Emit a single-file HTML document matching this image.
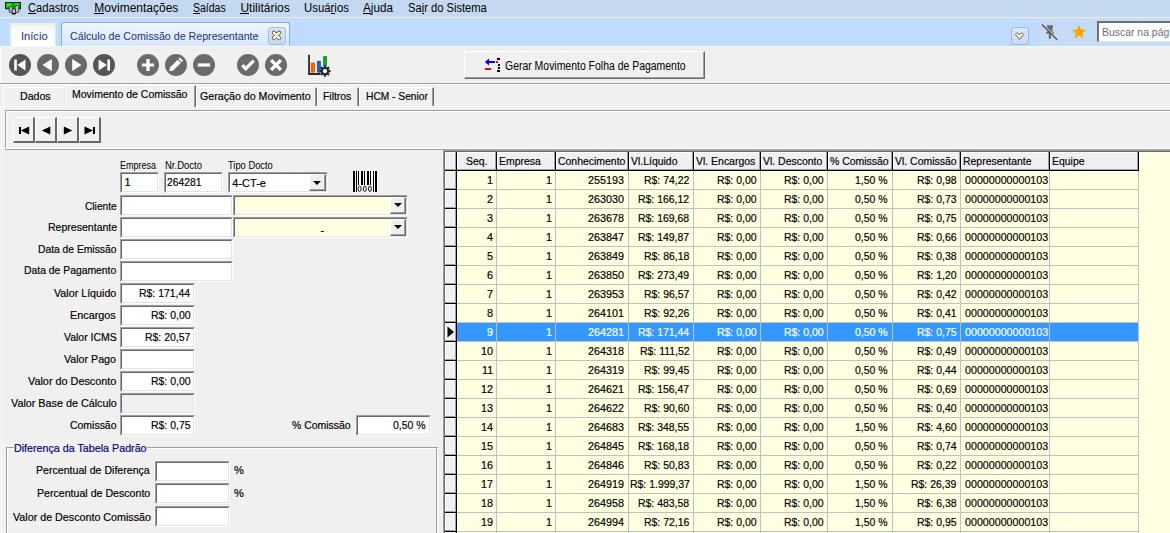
<!DOCTYPE html>
<html><head><meta charset="utf-8"><style>
html,body{margin:0;padding:0;}
body{width:1170px;height:533px;overflow:hidden;position:relative;background:#f0f0f0;font-family:"Liberation Sans",sans-serif;}
.t{position:absolute;white-space:pre;line-height:1;-webkit-text-stroke:0.18px currentColor;}
.r{position:absolute;}
svg{position:absolute;}
</style></head><body>
<div class="r" style="left:0px;top:0px;width:1170px;height:17px;background:#c4d9f0"></div>
<div class="r" style="left:0px;top:17px;width:1170px;height:1px;background:#eceef2"></div>
<svg style="left:0px;top:0px" width="24" height="17" viewBox="0 0 24 17">
<rect x="5.5" y="2.5" width="15" height="6.3" fill="#00b400" stroke="#062a06" stroke-width="1"/>
<rect x="7" y="3.5" width="4" height="3" fill="#10ff10"/><rect x="15" y="3.5" width="4" height="2" fill="#20e020"/>
<rect x="9.2" y="6.6" width="3.8" height="6" rx="1.2" fill="#b4b4b4" stroke="#222" stroke-width="0.8"/>
<rect x="15" y="5.6" width="3.8" height="7" rx="1.2" fill="#c0c0c0" stroke="#222" stroke-width="0.8"/>
<rect x="12" y="8.8" width="3.6" height="5.2" rx="1" fill="#bcbcbc" stroke="#111" stroke-width="0.8"/>
<rect x="12" y="13" width="3.6" height="1.2" fill="#000"/>
</svg>
<div class="t" style="left:28.30px;top:2px;font-size:12px;color:#000;transform:scaleX(0.9291);transform-origin:0 0;-webkit-text-stroke:0">Cadastros</div>
<div class="r" style="left:28px;top:13px;width:8px;height:1px;background:#000"></div>
<div class="t" style="left:94.30px;top:2px;font-size:12px;color:#000;-webkit-text-stroke:0">Movimentações</div>
<div class="r" style="left:94px;top:13px;width:10px;height:1px;background:#000"></div>
<div class="t" style="left:193.00px;top:2px;font-size:12px;color:#000;transform:scaleX(0.8757);transform-origin:0 0;-webkit-text-stroke:0">Saídas</div>
<div class="r" style="left:193px;top:13px;width:7px;height:1px;background:#000"></div>
<div class="t" style="left:240.40px;top:2px;font-size:12px;color:#000;-webkit-text-stroke:0">Utilitários</div>
<div class="r" style="left:240px;top:13px;width:9px;height:1px;background:#000"></div>
<div class="t" style="left:304.30px;top:2px;font-size:12px;color:#000;transform:scaleX(0.9489);transform-origin:0 0;-webkit-text-stroke:0">Usuários</div>
<div class="r" style="left:331px;top:13px;width:4px;height:1px;background:#000"></div>
<div class="t" style="left:363.20px;top:2px;font-size:12px;color:#000;transform:scaleX(0.9742);transform-origin:0 0;-webkit-text-stroke:0">Ajuda</div>
<div class="r" style="left:363px;top:13px;width:8px;height:1px;background:#000"></div>
<div class="t" style="left:408.20px;top:2px;font-size:12px;color:#000;transform:scaleX(0.9306);transform-origin:0 0;-webkit-text-stroke:0">Sair do Sistema</div>
<div class="r" style="left:422px;top:13px;width:2px;height:1px;background:#000"></div>
<div class="r" style="left:0px;top:18px;width:1170px;height:28px;background:#bfdbff"></div>
<div class="r" style="left:1036px;top:18px;width:134px;height:28px;background:#c6dbf5"></div>
<div class="r" style="left:0px;top:46px;width:1170px;height:1px;background:#f4f8fd"></div>
<div class="r" style="left:9px;top:22px;width:48px;height:24px;background:linear-gradient(#efedea,#efedea 2px,#f6f6f6 3px,#fbfbfb 50%,#fff);border:1px solid #d6dde6;border-bottom:none;border-radius:2px 2px 0 0;box-sizing:border-box"></div>
<div class="r" style="left:10px;top:25px;width:1px;height:21px;background:#c0f4ff"></div>
<div class="r" style="left:55px;top:25px;width:1px;height:21px;background:#c0f4ff"></div>
<div class="t" style="left:21.20px;top:31px;font-size:11px;color:#20357f;transform:scaleX(1.0115);transform-origin:0 0;-webkit-text-stroke:0">Início</div>
<div class="r" style="left:61px;top:22px;width:229px;height:24px;background:linear-gradient(#f0f6fe,#e4eefb 50%,#d8e7f9);border:1px solid #8aaedc;border-bottom:none;border-radius:3px 3px 0 0;box-sizing:border-box"></div>
<div class="r" style="left:62px;top:25px;width:1px;height:21px;background:#d0f4ff"></div>
<div class="t" style="left:69.50px;top:31px;font-size:11px;color:#20357f;transform:scaleX(0.9692);transform-origin:0 0;-webkit-text-stroke:0">Cálculo de Comissão de Representante</div>
<div class="r" style="left:268px;top:27px;width:18px;height:18px;background:linear-gradient(#d8e6f8,#c6daf3);border:1px solid #a4bde0;border-radius:3px;box-sizing:border-box"></div>
<svg style="left:271px;top:30px" width="12" height="12" viewBox="0 0 12 12">
<path d="M2.8 2.7 L8.2 8.1 M8.2 2.7 L2.8 8.1" stroke="#7a6420" stroke-width="4" stroke-linecap="round"/>
<path d="M2.8 2.7 L8.2 8.1 M8.2 2.7 L2.8 8.1" stroke="#fff" stroke-width="2.2" stroke-linecap="round"/>
</svg>
<div class="r" style="left:1011px;top:27px;width:18px;height:18px;background:linear-gradient(#dbe7f7,#c8daf1);border:1px solid #9db6d9;border-radius:3px;box-sizing:border-box"></div>
<svg style="left:1014px;top:31px" width="12" height="10" viewBox="0 0 12 10">
<path d="M1.5 3.5 L2.5 2.2 L3.8 2.2 L5.5 4 L7.2 2.2 L8.5 2.2 L9.5 3.5 L5.5 8.5 Z" fill="#fff" stroke="#7a6420" stroke-width="1"/>
</svg>
<svg style="left:1040px;top:23px" width="18" height="18" viewBox="0 0 18 18">
<path d="M7 2.2 H13 V4.5 L12.3 5.2 V8.3 L13.8 9.7 V10.7 H10.9 V15.7 H8.8 V10.7 H6.1 V9.7 L7.7 8.3 V5.2 L7 4.5 Z" fill="#6a6a6a"/>
<path d="M3.0 1.5 L18.3 16.8" stroke="#c6daf5" stroke-width="1.4"/>
<path d="M1.9 1.5 L17.2 16.8" stroke="#5e5e5e" stroke-width="1.6"/>
</svg>
<svg style="left:1071px;top:24px" width="16" height="16" viewBox="0 0 16 16">
<path d="M8 1 L10.1 5.6 L15 6.1 L11.3 9.4 L12.4 14.4 L8 11.8 L3.6 14.4 L4.7 9.4 L1 6.1 L5.9 5.6 Z" fill="#ffa500"/>
</svg>
<div class="r" style="left:1097px;top:21px;width:80px;height:21px;background:#fff;border-top:2px solid #6d6d6d;border-left:2px solid #6d6d6d;border-bottom:1px solid #e3e3e3;box-sizing:border-box"></div>
<div class="t" style="left:1101.70px;top:27px;font-size:11px;color:#6d6d80;transform:scaleX(0.9479);transform-origin:0 0;-webkit-text-stroke:0">Buscar na pág</div>
<div class="r" style="left:0px;top:47px;width:1px;height:36px;background:#fff"></div>
<div class="r" style="left:0px;top:83px;width:1170px;height:1px;background:#a0a0a0"></div>
<div class="r" style="left:0px;top:84px;width:1170px;height:1px;background:#fff"></div>
<svg style="left:7.75px;top:53px" width="24" height="24" viewBox="0 0 24 24"><circle cx="12" cy="12" r="11" fill="#555555"/><rect x="6.2" y="6.5" width="2.6" height="11" fill="#fff"/><path d="M9.3 12 L17.5 6.5 V17.5 Z" fill="#fff"/></svg>
<svg style="left:35.8px;top:53px" width="24" height="24" viewBox="0 0 24 24"><circle cx="12" cy="12" r="11" fill="#696969"/><path d="M6.5 12 L15.8 6 V18 Z" fill="#fff"/></svg>
<svg style="left:63.900000000000006px;top:53px" width="24" height="24" viewBox="0 0 24 24"><circle cx="12" cy="12" r="11" fill="#696969"/><path d="M17.5 12 L8.2 6 V18 Z" fill="#fff"/></svg>
<svg style="left:91.8px;top:53px" width="24" height="24" viewBox="0 0 24 24"><circle cx="12" cy="12" r="11" fill="#555555"/><rect x="15.4" y="6.5" width="2.6" height="11" fill="#fff"/><path d="M14.9 12 L6.6 6.5 V17.5 Z" fill="#fff"/></svg>
<svg style="left:135.8px;top:53px" width="24" height="24" viewBox="0 0 24 24"><circle cx="12" cy="12" r="11" fill="#6b6b6b"/><path d="M12 5.9 V18.1 M5.9 12 H18.1" stroke="#fff" stroke-width="3.2"/></svg>
<svg style="left:164px;top:53px" width="24" height="24" viewBox="0 0 24 24"><circle cx="12" cy="12" r="11" fill="#6b6b6b"/><path d="M5.4 18.2 L6 14.4 L13.6 6.8 L16.8 10 L9.2 17.6 Z" fill="#fff"/><path d="M14.3 6.1 L16 4.4 L19.2 7.6 L17.5 9.3 Z" fill="#fff"/></svg>
<svg style="left:191.8px;top:53px" width="24" height="24" viewBox="0 0 24 24"><circle cx="12" cy="12" r="11" fill="#6b6b6b"/><path d="M5.8 12 H18.1" stroke="#fff" stroke-width="3.2"/></svg>
<svg style="left:235.9px;top:53px" width="24" height="24" viewBox="0 0 24 24"><circle cx="12" cy="12" r="11" fill="#6b6b6b"/><path d="M6.3 12.2 L9.8 15.6 L17.8 7.6" fill="none" stroke="#fff" stroke-width="3.4"/></svg>
<svg style="left:264px;top:53px" width="24" height="24" viewBox="0 0 24 24"><circle cx="12" cy="12" r="11" fill="#6b6b6b"/><path d="M7.1 7.1 L16.9 16.9 M16.9 7.1 L7.1 16.9" stroke="#fff" stroke-width="3.4"/></svg>
<svg style="left:306px;top:53px" width="26" height="24" viewBox="0 0 26 24">
<path d="M3 1.8 V21 H14.5" fill="none" stroke="#2b2b2b" stroke-width="1.8"/>
<rect x="4.7" y="9.6" width="4.3" height="10.2" rx="0.8" fill="#ff6000"/>
<rect x="10.9" y="7.8" width="4" height="12" rx="0.8" fill="#1c60c8"/>
<rect x="17" y="3" width="4" height="10.3" rx="0.8" fill="#2a9a2a"/>
<g transform="translate(19,18.1)"><circle r="4.2" fill="#2b2b2b"/>
<path d="M-1.1 -5.6 H1.1 V5.6 H-1.1 Z M-5.6 -1.1 V1.1 H5.6 V-1.1 Z" fill="#2b2b2b"/>
<path d="M-1.1 -5.6 H1.1 V5.6 H-1.1 Z M-5.6 -1.1 V1.1 H5.6 V-1.1 Z" fill="#2b2b2b" transform="rotate(45)"/>
<circle r="2.1" fill="#fff"/></g>
</svg>
<div class="r" style="left:464px;top:51px;width:241px;height:28px;background:#f0f0f0;border-top:1px solid #fff;border-left:1px solid #fff;border-bottom:1px solid #696969;border-right:1px solid #696969;box-sizing:border-box"></div>
<div class="r" style="left:465px;top:52px;width:239px;height:26px;border-bottom:1px solid #a0a0a0;border-right:1px solid #a0a0a0;box-sizing:border-box"></div>
<svg style="left:478px;top:52px" width="26" height="24" viewBox="0 0 26 24" shape-rendering="crispEdges">
<rect x="9" y="9" width="8" height="2" fill="#0000ff"/>
<path d="M6.8 10 L11 6.6 V13.4 Z" fill="#0000ff" shape-rendering="auto"/>
<rect x="18" y="9" width="2" height="2" fill="#ff0000"/>
<rect x="7" y="16" width="6" height="2" fill="#ff0000"/>
<rect x="19" y="6" width="3" height="2" fill="#000"/><rect x="20" y="12" width="2" height="2" fill="#000"/>
<rect x="20" y="15" width="2" height="2" fill="#000"/><rect x="19" y="18" width="3" height="2" fill="#000"/>
</svg>
<div class="t" style="left:505.00px;top:60px;font-size:12px;color:#000;transform:scaleX(0.8707);transform-origin:0 0;-webkit-text-stroke:0">Gerar Movimento Folha de Pagamento</div>
<div class="r" style="left:3px;top:87px;width:62px;height:19px;background:#f0f0f0;border-top:1px solid #fff;border-left:1px solid #fff;border-right:1px solid #e3e3e3;box-sizing:border-box"></div>
<div class="r" style="left:196px;top:87px;width:121px;height:19px;background:#f0f0f0;border-top:1px solid #fff;border-left:1px solid #fff;border-right:1px solid #696969;box-sizing:border-box"></div>
<div class="r" style="left:197px;top:88px;width:119px;height:18px;border-right:1px solid #a0a0a0;box-sizing:border-box"></div>
<div class="r" style="left:317px;top:87px;width:42px;height:19px;background:#f0f0f0;border-top:1px solid #fff;border-left:1px solid #fff;border-right:1px solid #696969;box-sizing:border-box"></div>
<div class="r" style="left:318px;top:88px;width:40px;height:18px;border-right:1px solid #a0a0a0;box-sizing:border-box"></div>
<div class="r" style="left:359px;top:87px;width:75px;height:19px;background:#f0f0f0;border-top:1px solid #fff;border-left:1px solid #fff;border-right:1px solid #696969;box-sizing:border-box"></div>
<div class="r" style="left:360px;top:88px;width:73px;height:18px;border-right:1px solid #a0a0a0;box-sizing:border-box"></div>
<div class="r" style="left:0px;top:106px;width:1170px;height:1px;background:#fff"></div>
<div class="r" style="left:1px;top:106px;width:1px;height:427px;background:#f8f8f8"></div>
<div class="r" style="left:65px;top:85px;width:131px;height:22px;background:#f0f0f0;border-top:1px solid #fff;border-left:1px solid #fff;border-right:1px solid #696969;box-sizing:border-box"></div>
<div class="r" style="left:66px;top:86px;width:129px;height:21px;border-right:1px solid #a0a0a0;box-sizing:border-box"></div>
<div class="r" style="left:66px;top:106px;width:128px;height:2px;background:#f0f0f0"></div>
<div class="t" style="left:20.00px;top:91px;font-size:11px;color:#000;transform:scaleX(0.9625);transform-origin:0 0;">Dados</div>
<div class="t" style="left:71.80px;top:89px;font-size:11px;color:#000;transform:scaleX(0.9537);transform-origin:0 0;">Movimento de Comissão</div>
<div class="t" style="left:200.40px;top:91px;font-size:11px;color:#000;transform:scaleX(0.9675);transform-origin:0 0;">Geração do Movimento</div>
<div class="t" style="left:323.30px;top:91px;font-size:11px;color:#000;transform:scaleX(0.9433);transform-origin:0 0;">Filtros</div>
<div class="t" style="left:365.60px;top:91px;font-size:11px;color:#000;transform:scaleX(0.9284);transform-origin:0 0;">HCM - Senior</div>
<div class="r" style="left:5px;top:110px;width:1165px;height:1px;background:#a0a0a0"></div>
<div class="r" style="left:5px;top:110px;width:1px;height:39px;background:#a0a0a0"></div>
<div class="r" style="left:6px;top:111px;width:1164px;height:1px;background:#fff"></div>
<div class="r" style="left:6px;top:111px;width:1px;height:38px;background:#fff"></div>
<div class="r" style="left:5px;top:148px;width:1165px;height:1px;background:#fff"></div>
<div class="r" style="left:5px;top:149px;width:1165px;height:1px;background:#a0a0a0"></div>
<div class="r" style="left:13px;top:117px;width:22px;height:26px;background:#f0f0f0;border-top:1px solid #fff;border-left:1px solid #fff;border-bottom:2px solid #696969;border-right:2px solid #696969;box-sizing:border-box"></div>
<div class="r" style="left:35px;top:117px;width:22px;height:26px;background:#f0f0f0;border-top:1px solid #fff;border-left:1px solid #fff;border-bottom:2px solid #696969;border-right:2px solid #696969;box-sizing:border-box"></div>
<div class="r" style="left:57px;top:117px;width:22px;height:26px;background:#f0f0f0;border-top:1px solid #fff;border-left:1px solid #fff;border-bottom:2px solid #696969;border-right:2px solid #696969;box-sizing:border-box"></div>
<div class="r" style="left:79px;top:117px;width:22px;height:26px;background:#f0f0f0;border-top:1px solid #fff;border-left:1px solid #fff;border-bottom:2px solid #696969;border-right:2px solid #696969;box-sizing:border-box"></div>
<svg style="left:13px;top:117px" width="88" height="26" viewBox="0 0 88 26">
<rect x="6" y="10" width="2" height="7" fill="#000"/><path d="M7.8 13.5 L16.2 9.6 V17.4 Z" fill="#000"/>
<path d="M28.8 13.5 L37.3 9.6 V17.4 Z" fill="#000"/>
<path d="M59.3 13.5 L50.8 9.6 V17.4 Z" fill="#000"/>
<path d="M80 13.5 L71.5 9.6 V17.4 Z" fill="#000"/><rect x="80" y="10" width="2" height="7" fill="#000"/>
</svg>
<div class="t" style="left:120.30px;top:161px;font-size:10px;color:#000;transform:scaleX(0.8975);transform-origin:0 0;-webkit-text-stroke:0">Empresa</div>
<div class="t" style="left:164.60px;top:161px;font-size:10px;color:#000;transform:scaleX(0.9513);transform-origin:0 0;-webkit-text-stroke:0">Nr.Docto</div>
<div class="t" style="left:228.20px;top:161px;font-size:10px;color:#000;transform:scaleX(0.9333);transform-origin:0 0;-webkit-text-stroke:0">Tipo Docto</div>
<div class="r" style="left:120px;top:172px;width:39px;height:21px;background:#fff;border-top:1px solid #a0a0a0;border-left:1px solid #a0a0a0;border-bottom:1px solid #fff;border-right:1px solid #fff;box-sizing:border-box"></div>
<div class="r" style="left:121px;top:173px;width:37px;height:19px;border-top:1px solid #696969;border-left:1px solid #696969;border-bottom:1px solid #e3e3e3;border-right:1px solid #e3e3e3;box-sizing:border-box"></div>
<div class="t" style="left:124.50px;top:177px;font-size:11px;color:#000;">1</div>
<div class="r" style="left:164px;top:172px;width:59px;height:21px;background:#fff;border-top:1px solid #a0a0a0;border-left:1px solid #a0a0a0;border-bottom:1px solid #fff;border-right:1px solid #fff;box-sizing:border-box"></div>
<div class="r" style="left:165px;top:173px;width:57px;height:19px;border-top:1px solid #696969;border-left:1px solid #696969;border-bottom:1px solid #e3e3e3;border-right:1px solid #e3e3e3;box-sizing:border-box"></div>
<div class="t" style="left:167.00px;top:177px;font-size:11px;color:#000;transform:scaleX(0.9378);transform-origin:0 0;">264281</div>
<div class="r" style="left:228px;top:172px;width:100px;height:21px;background:#fff;border-top:1px solid #a0a0a0;border-left:1px solid #a0a0a0;border-bottom:1px solid #fff;border-right:1px solid #fff;box-sizing:border-box"></div>
<div class="r" style="left:229px;top:173px;width:98px;height:19px;border-top:1px solid #696969;border-left:1px solid #696969;border-bottom:1px solid #e3e3e3;border-right:1px solid #e3e3e3;box-sizing:border-box"></div>
<div class="r" style="left:309px;top:174px;width:17px;height:17px;background:#f0f0f0;border-top:1px solid #fff;border-left:1px solid #fff;border-bottom:1px solid #696969;border-right:1px solid #696969;box-sizing:border-box"></div>
<div class="r" style="left:310px;top:175px;width:15px;height:15px;border-bottom:1px solid #a0a0a0;border-right:1px solid #a0a0a0;box-sizing:border-box"></div>
<svg style="left:313px;top:181px" width="9" height="5" viewBox="0 0 9 5"><path d="M0 0 H8 L4 4 Z" fill="#000"/></svg>
<div class="t" style="left:232.30px;top:178px;font-size:11px;color:#000;">4-CT-e</div>
<svg style="left:352px;top:170px" width="26" height="23" viewBox="0 0 26 23">
<rect x="0" y="0" width="26" height="23" fill="#fff" opacity="0.4"/>
<g shape-rendering="crispEdges">
<rect x="1" y="1" width="2" height="21" fill="#000"/><rect x="4" y="1" width="1" height="21" fill="#000"/>
<rect x="6" y="1" width="1" height="14" fill="#000"/><rect x="9" y="1" width="2" height="14" fill="#000"/>
<rect x="12" y="1" width="1" height="14" fill="#000"/><rect x="15" y="1" width="2" height="14" fill="#000"/>
<rect x="18" y="1" width="1" height="14" fill="#000"/><rect x="21" y="1" width="1" height="21" fill="#000"/>
<rect x="23" y="1" width="2" height="21" fill="#000"/></g>
<ellipse cx="7.6" cy="18.8" rx="1.5" ry="2.7" fill="none" stroke="#000" stroke-width="0.9"/>
<ellipse cx="12.8" cy="18.8" rx="1.5" ry="2.7" fill="none" stroke="#000" stroke-width="0.9"/>
<ellipse cx="17.9" cy="18.8" rx="1.5" ry="2.7" fill="none" stroke="#000" stroke-width="0.9"/>
</svg>
<div class="t" style="left:85.10px;top:201px;font-size:11px;color:#000;transform:scaleX(0.9265);transform-origin:0 0;">Cliente</div>
<div class="t" style="left:47.60px;top:222px;font-size:11px;color:#000;transform:scaleX(0.9583);transform-origin:0 0;">Representante</div>
<div class="t" style="left:38.00px;top:244px;font-size:11px;color:#000;transform:scaleX(0.9357);transform-origin:0 0;">Data de Emissão</div>
<div class="t" style="left:24.20px;top:265px;font-size:11px;color:#000;transform:scaleX(0.9429);transform-origin:0 0;">Data de Pagamento</div>
<div class="r" style="left:120px;top:195px;width:113px;height:21px;background:#fff;border-top:1px solid #a0a0a0;border-left:1px solid #a0a0a0;border-bottom:1px solid #fff;border-right:1px solid #fff;box-sizing:border-box"></div>
<div class="r" style="left:121px;top:196px;width:111px;height:19px;border-top:1px solid #696969;border-left:1px solid #696969;border-bottom:1px solid #e3e3e3;border-right:1px solid #e3e3e3;box-sizing:border-box"></div>
<div class="r" style="left:120px;top:217px;width:113px;height:21px;background:#fff;border-top:1px solid #a0a0a0;border-left:1px solid #a0a0a0;border-bottom:1px solid #fff;border-right:1px solid #fff;box-sizing:border-box"></div>
<div class="r" style="left:121px;top:218px;width:111px;height:19px;border-top:1px solid #696969;border-left:1px solid #696969;border-bottom:1px solid #e3e3e3;border-right:1px solid #e3e3e3;box-sizing:border-box"></div>
<div class="r" style="left:120px;top:239px;width:113px;height:21px;background:#fff;border-top:1px solid #a0a0a0;border-left:1px solid #a0a0a0;border-bottom:1px solid #fff;border-right:1px solid #fff;box-sizing:border-box"></div>
<div class="r" style="left:121px;top:240px;width:111px;height:19px;border-top:1px solid #696969;border-left:1px solid #696969;border-bottom:1px solid #e3e3e3;border-right:1px solid #e3e3e3;box-sizing:border-box"></div>
<div class="r" style="left:120px;top:261px;width:113px;height:21px;background:#fff;border-top:1px solid #a0a0a0;border-left:1px solid #a0a0a0;border-bottom:1px solid #fff;border-right:1px solid #fff;box-sizing:border-box"></div>
<div class="r" style="left:121px;top:262px;width:111px;height:19px;border-top:1px solid #696969;border-left:1px solid #696969;border-bottom:1px solid #e3e3e3;border-right:1px solid #e3e3e3;box-sizing:border-box"></div>
<div class="r" style="left:233px;top:195px;width:175px;height:21px;background:#ffffe1;border-top:1px solid #a0a0a0;border-left:1px solid #a0a0a0;border-bottom:1px solid #fff;border-right:1px solid #fff;box-sizing:border-box"></div>
<div class="r" style="left:234px;top:196px;width:173px;height:19px;border-top:1px solid #696969;border-left:1px solid #696969;border-bottom:1px solid #e3e3e3;border-right:1px solid #e3e3e3;box-sizing:border-box"></div>
<div class="r" style="left:390px;top:197px;width:16px;height:17px;background:#f0f0f0;border-top:1px solid #fff;border-left:1px solid #fff;border-bottom:1px solid #696969;border-right:1px solid #696969;box-sizing:border-box"></div>
<div class="r" style="left:391px;top:198px;width:14px;height:15px;border-bottom:1px solid #a0a0a0;border-right:1px solid #a0a0a0;box-sizing:border-box"></div>
<svg style="left:394px;top:203px" width="9" height="5" viewBox="0 0 9 5"><path d="M0 0 H8 L4 4 Z" fill="#000"/></svg>
<div class="r" style="left:233px;top:217px;width:175px;height:21px;background:#ffffe1;border-top:1px solid #a0a0a0;border-left:1px solid #a0a0a0;border-bottom:1px solid #fff;border-right:1px solid #fff;box-sizing:border-box"></div>
<div class="r" style="left:234px;top:218px;width:173px;height:19px;border-top:1px solid #696969;border-left:1px solid #696969;border-bottom:1px solid #e3e3e3;border-right:1px solid #e3e3e3;box-sizing:border-box"></div>
<div class="r" style="left:390px;top:219px;width:16px;height:17px;background:#f0f0f0;border-top:1px solid #fff;border-left:1px solid #fff;border-bottom:1px solid #696969;border-right:1px solid #696969;box-sizing:border-box"></div>
<div class="r" style="left:391px;top:220px;width:14px;height:15px;border-bottom:1px solid #a0a0a0;border-right:1px solid #a0a0a0;box-sizing:border-box"></div>
<svg style="left:394px;top:225px" width="9" height="5" viewBox="0 0 9 5"><path d="M0 0 H8 L4 4 Z" fill="#000"/></svg>
<div class="t" style="left:320.50px;top:225px;font-size:11px;color:#000;">-</div>
<div class="t" style="left:54.00px;top:288px;font-size:11px;color:#000;transform:scaleX(0.9734);transform-origin:0 0;">Valor Líquido</div>
<div class="r" style="left:120px;top:283px;width:75px;height:21px;background:#fff;border-top:1px solid #a0a0a0;border-left:1px solid #a0a0a0;border-bottom:1px solid #fff;border-right:1px solid #fff;box-sizing:border-box"></div>
<div class="r" style="left:121px;top:284px;width:73px;height:19px;border-top:1px solid #696969;border-left:1px solid #696969;border-bottom:1px solid #e3e3e3;border-right:1px solid #e3e3e3;box-sizing:border-box"></div>
<div class="t" style="left:139.40px;top:288px;font-size:11px;color:#000;transform:scaleX(0.9500);transform-origin:0 0;">R$: 171,44</div>
<div class="t" style="left:70.00px;top:310px;font-size:11px;color:#000;transform:scaleX(0.9851);transform-origin:0 0;">Encargos</div>
<div class="r" style="left:120px;top:305px;width:75px;height:21px;background:#fff;border-top:1px solid #a0a0a0;border-left:1px solid #a0a0a0;border-bottom:1px solid #fff;border-right:1px solid #fff;box-sizing:border-box"></div>
<div class="r" style="left:121px;top:306px;width:73px;height:19px;border-top:1px solid #696969;border-left:1px solid #696969;border-bottom:1px solid #e3e3e3;border-right:1px solid #e3e3e3;box-sizing:border-box"></div>
<div class="t" style="left:150.80px;top:310px;font-size:11px;color:#000;transform:scaleX(0.9500);transform-origin:0 0;">R$: 0,00</div>
<div class="t" style="left:64.00px;top:332px;font-size:11px;color:#000;transform:scaleX(0.9509);transform-origin:0 0;">Valor ICMS</div>
<div class="r" style="left:120px;top:327px;width:75px;height:21px;background:#fff;border-top:1px solid #a0a0a0;border-left:1px solid #a0a0a0;border-bottom:1px solid #fff;border-right:1px solid #fff;box-sizing:border-box"></div>
<div class="r" style="left:121px;top:328px;width:73px;height:19px;border-top:1px solid #696969;border-left:1px solid #696969;border-bottom:1px solid #e3e3e3;border-right:1px solid #e3e3e3;box-sizing:border-box"></div>
<div class="t" style="left:145.10px;top:332px;font-size:11px;color:#000;transform:scaleX(0.9500);transform-origin:0 0;">R$: 20,57</div>
<div class="t" style="left:64.00px;top:354px;font-size:11px;color:#000;transform:scaleX(0.9685);transform-origin:0 0;">Valor Pago</div>
<div class="r" style="left:120px;top:349px;width:75px;height:21px;background:#fff;border-top:1px solid #a0a0a0;border-left:1px solid #a0a0a0;border-bottom:1px solid #fff;border-right:1px solid #fff;box-sizing:border-box"></div>
<div class="r" style="left:121px;top:350px;width:73px;height:19px;border-top:1px solid #696969;border-left:1px solid #696969;border-bottom:1px solid #e3e3e3;border-right:1px solid #e3e3e3;box-sizing:border-box"></div>
<div class="t" style="left:27.60px;top:376px;font-size:11px;color:#000;transform:scaleX(0.9856);transform-origin:0 0;">Valor do Desconto</div>
<div class="r" style="left:120px;top:371px;width:75px;height:21px;background:#fff;border-top:1px solid #a0a0a0;border-left:1px solid #a0a0a0;border-bottom:1px solid #fff;border-right:1px solid #fff;box-sizing:border-box"></div>
<div class="r" style="left:121px;top:372px;width:73px;height:19px;border-top:1px solid #696969;border-left:1px solid #696969;border-bottom:1px solid #e3e3e3;border-right:1px solid #e3e3e3;box-sizing:border-box"></div>
<div class="t" style="left:150.80px;top:376px;font-size:11px;color:#000;transform:scaleX(0.9500);transform-origin:0 0;">R$: 0,00</div>
<div class="t" style="left:10.50px;top:398px;font-size:11px;color:#000;transform:scaleX(0.9796);transform-origin:0 0;">Valor Base de Cálculo</div>
<div class="r" style="left:120px;top:393px;width:75px;height:21px;background:#f0f0f0;border-top:1px solid #a0a0a0;border-left:1px solid #a0a0a0;border-bottom:1px solid #fff;border-right:1px solid #fff;box-sizing:border-box"></div>
<div class="r" style="left:121px;top:394px;width:73px;height:19px;border-top:1px solid #696969;border-left:1px solid #696969;border-bottom:1px solid #e3e3e3;border-right:1px solid #e3e3e3;box-sizing:border-box"></div>
<div class="t" style="left:69.70px;top:420px;font-size:11px;color:#000;transform:scaleX(0.9510);transform-origin:0 0;">Comissão</div>
<div class="r" style="left:120px;top:415px;width:75px;height:21px;background:#fff;border-top:1px solid #a0a0a0;border-left:1px solid #a0a0a0;border-bottom:1px solid #fff;border-right:1px solid #fff;box-sizing:border-box"></div>
<div class="r" style="left:121px;top:416px;width:73px;height:19px;border-top:1px solid #696969;border-left:1px solid #696969;border-bottom:1px solid #e3e3e3;border-right:1px solid #e3e3e3;box-sizing:border-box"></div>
<div class="t" style="left:150.80px;top:420px;font-size:11px;color:#000;transform:scaleX(0.9500);transform-origin:0 0;">R$: 0,75</div>
<div class="t" style="left:292.30px;top:420px;font-size:11px;color:#000;transform:scaleX(0.9500);transform-origin:0 0;">% Comissão</div>
<div class="r" style="left:356px;top:415px;width:75px;height:21px;background:#fff;border-top:1px solid #a0a0a0;border-left:1px solid #a0a0a0;border-bottom:1px solid #fff;border-right:1px solid #fff;box-sizing:border-box"></div>
<div class="r" style="left:357px;top:416px;width:73px;height:19px;border-top:1px solid #696969;border-left:1px solid #696969;border-bottom:1px solid #e3e3e3;border-right:1px solid #e3e3e3;box-sizing:border-box"></div>
<div class="t" style="left:393.25px;top:420px;font-size:11px;color:#000;transform:scaleX(0.9500);transform-origin:0 0;">0,50 %</div>
<div class="r" style="left:6px;top:447px;width:432px;height:100px;border-top:1px solid #a0a0a0;border-left:1px solid #a0a0a0;border-right:1px solid #fff;box-sizing:border-box"></div>
<div class="r" style="left:7px;top:448px;width:430px;height:100px;border-top:1px solid #fff;border-left:1px solid #fff;border-right:1px solid #a0a0a0;box-sizing:border-box"></div>
<div class="r" style="left:437px;top:447px;width:1px;height:1px;background:#a0a0a0"></div>
<div class="r" style="left:14px;top:440px;width:133px;height:14px;background:#f0f0f0"></div>
<div class="t" style="left:14.20px;top:443px;font-size:11px;color:#000080;transform:scaleX(0.9735);transform-origin:0 0;">Diferença da Tabela Padrão</div>
<div class="t" style="left:36.40px;top:465px;font-size:11px;color:#000;transform:scaleX(0.9639);transform-origin:0 0;">Percentual de Diferença</div>
<div class="t" style="left:37.30px;top:488px;font-size:11px;color:#000;transform:scaleX(0.9644);transform-origin:0 0;">Percentual de Desconto</div>
<div class="t" style="left:12.75px;top:512px;font-size:11px;color:#000;transform:scaleX(0.9743);transform-origin:0 0;">Valor de Desconto Comissão</div>
<div class="r" style="left:155px;top:461px;width:75px;height:21px;background:#fff;border-top:1px solid #a0a0a0;border-left:1px solid #a0a0a0;border-bottom:1px solid #fff;border-right:1px solid #fff;box-sizing:border-box"></div>
<div class="r" style="left:156px;top:462px;width:73px;height:19px;border-top:1px solid #696969;border-left:1px solid #696969;border-bottom:1px solid #e3e3e3;border-right:1px solid #e3e3e3;box-sizing:border-box"></div>
<div class="r" style="left:155px;top:483px;width:75px;height:21px;background:#fff;border-top:1px solid #a0a0a0;border-left:1px solid #a0a0a0;border-bottom:1px solid #fff;border-right:1px solid #fff;box-sizing:border-box"></div>
<div class="r" style="left:156px;top:484px;width:73px;height:19px;border-top:1px solid #696969;border-left:1px solid #696969;border-bottom:1px solid #e3e3e3;border-right:1px solid #e3e3e3;box-sizing:border-box"></div>
<div class="r" style="left:155px;top:506px;width:75px;height:21px;background:#fff;border-top:1px solid #a0a0a0;border-left:1px solid #a0a0a0;border-bottom:1px solid #fff;border-right:1px solid #fff;box-sizing:border-box"></div>
<div class="r" style="left:156px;top:507px;width:73px;height:19px;border-top:1px solid #696969;border-left:1px solid #696969;border-bottom:1px solid #e3e3e3;border-right:1px solid #e3e3e3;box-sizing:border-box"></div>
<div class="t" style="left:234.00px;top:465px;font-size:11px;color:#000;">%</div>
<div class="t" style="left:234.00px;top:488px;font-size:11px;color:#000;">%</div>
<div class="r" style="left:443px;top:150px;width:727px;height:383px;background:#ffffe1"></div>
<div class="r" style="left:443px;top:150px;width:727px;height:1px;background:#a0a0a0"></div>
<div class="r" style="left:443px;top:151px;width:727px;height:1px;background:#696969"></div>
<div class="r" style="left:443px;top:150px;width:1px;height:383px;background:#a0a0a0"></div>
<div class="r" style="left:444px;top:151px;width:1px;height:382px;background:#696969"></div>
<div class="r" style="left:445px;top:152px;width:11px;height:18px;background:#f0f0f0"></div>
<div class="r" style="left:445px;top:152px;width:10px;height:1px;background:#fff"></div>
<div class="r" style="left:445px;top:152px;width:1px;height:17px;background:#fff"></div>
<div class="r" style="left:445px;top:169px;width:11px;height:1px;background:#a0a0a0"></div>
<div class="r" style="left:455px;top:152px;width:1px;height:18px;background:#a0a0a0"></div>
<div class="r" style="left:445px;top:170px;width:12px;height:1px;background:#000"></div>
<div class="r" style="left:456px;top:152px;width:1px;height:19px;background:#000"></div>
<div class="r" style="left:457px;top:152px;width:39px;height:18px;background:#f0f0f0"></div>
<div class="r" style="left:457px;top:152px;width:38px;height:1px;background:#fff"></div>
<div class="r" style="left:457px;top:152px;width:1px;height:17px;background:#fff"></div>
<div class="r" style="left:457px;top:169px;width:39px;height:1px;background:#a0a0a0"></div>
<div class="r" style="left:495px;top:152px;width:1px;height:18px;background:#a0a0a0"></div>
<div class="r" style="left:457px;top:170px;width:40px;height:1px;background:#000"></div>
<div class="r" style="left:496px;top:152px;width:1px;height:19px;background:#000"></div>
<div class="t" style="left:465.50px;top:156px;font-size:11px;color:#000;transform:scaleX(0.9500);transform-origin:0 0;">Seq.</div>
<div class="r" style="left:497px;top:152px;width:58px;height:18px;background:#f0f0f0"></div>
<div class="r" style="left:497px;top:152px;width:57px;height:1px;background:#fff"></div>
<div class="r" style="left:497px;top:152px;width:1px;height:17px;background:#fff"></div>
<div class="r" style="left:497px;top:169px;width:58px;height:1px;background:#a0a0a0"></div>
<div class="r" style="left:554px;top:152px;width:1px;height:18px;background:#a0a0a0"></div>
<div class="r" style="left:497px;top:170px;width:59px;height:1px;background:#000"></div>
<div class="r" style="left:555px;top:152px;width:1px;height:19px;background:#000"></div>
<div class="t" style="left:499.30px;top:156px;font-size:11px;color:#000;transform:scaleX(0.9500);transform-origin:0 0;">Empresa</div>
<div class="r" style="left:556px;top:152px;width:72px;height:18px;background:#f0f0f0"></div>
<div class="r" style="left:556px;top:152px;width:71px;height:1px;background:#fff"></div>
<div class="r" style="left:556px;top:152px;width:1px;height:17px;background:#fff"></div>
<div class="r" style="left:556px;top:169px;width:72px;height:1px;background:#a0a0a0"></div>
<div class="r" style="left:627px;top:152px;width:1px;height:18px;background:#a0a0a0"></div>
<div class="r" style="left:556px;top:170px;width:73px;height:1px;background:#000"></div>
<div class="r" style="left:628px;top:152px;width:1px;height:19px;background:#000"></div>
<div class="t" style="left:558.30px;top:156px;font-size:11px;color:#000;transform:scaleX(0.9500);transform-origin:0 0;">Conhecimento</div>
<div class="r" style="left:629px;top:152px;width:64px;height:18px;background:#f0f0f0"></div>
<div class="r" style="left:629px;top:152px;width:63px;height:1px;background:#fff"></div>
<div class="r" style="left:629px;top:152px;width:1px;height:17px;background:#fff"></div>
<div class="r" style="left:629px;top:169px;width:64px;height:1px;background:#a0a0a0"></div>
<div class="r" style="left:692px;top:152px;width:1px;height:18px;background:#a0a0a0"></div>
<div class="r" style="left:629px;top:170px;width:65px;height:1px;background:#000"></div>
<div class="r" style="left:693px;top:152px;width:1px;height:19px;background:#000"></div>
<div class="t" style="left:631.30px;top:156px;font-size:11px;color:#000;transform:scaleX(0.9500);transform-origin:0 0;">Vl.Líquido</div>
<div class="r" style="left:694px;top:152px;width:66px;height:18px;background:#f0f0f0"></div>
<div class="r" style="left:694px;top:152px;width:65px;height:1px;background:#fff"></div>
<div class="r" style="left:694px;top:152px;width:1px;height:17px;background:#fff"></div>
<div class="r" style="left:694px;top:169px;width:66px;height:1px;background:#a0a0a0"></div>
<div class="r" style="left:759px;top:152px;width:1px;height:18px;background:#a0a0a0"></div>
<div class="r" style="left:694px;top:170px;width:67px;height:1px;background:#000"></div>
<div class="r" style="left:760px;top:152px;width:1px;height:19px;background:#000"></div>
<div class="t" style="left:696.30px;top:156px;font-size:11px;color:#000;transform:scaleX(0.9500);transform-origin:0 0;">Vl. Encargos</div>
<div class="r" style="left:761px;top:152px;width:66px;height:18px;background:#f0f0f0"></div>
<div class="r" style="left:761px;top:152px;width:65px;height:1px;background:#fff"></div>
<div class="r" style="left:761px;top:152px;width:1px;height:17px;background:#fff"></div>
<div class="r" style="left:761px;top:169px;width:66px;height:1px;background:#a0a0a0"></div>
<div class="r" style="left:826px;top:152px;width:1px;height:18px;background:#a0a0a0"></div>
<div class="r" style="left:761px;top:170px;width:67px;height:1px;background:#000"></div>
<div class="r" style="left:827px;top:152px;width:1px;height:19px;background:#000"></div>
<div class="t" style="left:763.30px;top:156px;font-size:11px;color:#000;transform:scaleX(0.9500);transform-origin:0 0;">Vl. Desconto</div>
<div class="r" style="left:828px;top:152px;width:64px;height:18px;background:#f0f0f0"></div>
<div class="r" style="left:828px;top:152px;width:63px;height:1px;background:#fff"></div>
<div class="r" style="left:828px;top:152px;width:1px;height:17px;background:#fff"></div>
<div class="r" style="left:828px;top:169px;width:64px;height:1px;background:#a0a0a0"></div>
<div class="r" style="left:891px;top:152px;width:1px;height:18px;background:#a0a0a0"></div>
<div class="r" style="left:828px;top:170px;width:65px;height:1px;background:#000"></div>
<div class="r" style="left:892px;top:152px;width:1px;height:19px;background:#000"></div>
<div class="t" style="left:830.30px;top:156px;font-size:11px;color:#000;transform:scaleX(0.9500);transform-origin:0 0;">% Comissão</div>
<div class="r" style="left:893px;top:152px;width:67px;height:18px;background:#f0f0f0"></div>
<div class="r" style="left:893px;top:152px;width:66px;height:1px;background:#fff"></div>
<div class="r" style="left:893px;top:152px;width:1px;height:17px;background:#fff"></div>
<div class="r" style="left:893px;top:169px;width:67px;height:1px;background:#a0a0a0"></div>
<div class="r" style="left:959px;top:152px;width:1px;height:18px;background:#a0a0a0"></div>
<div class="r" style="left:893px;top:170px;width:68px;height:1px;background:#000"></div>
<div class="r" style="left:960px;top:152px;width:1px;height:19px;background:#000"></div>
<div class="t" style="left:895.30px;top:156px;font-size:11px;color:#000;transform:scaleX(0.9500);transform-origin:0 0;">Vl. Comissão</div>
<div class="r" style="left:961px;top:152px;width:88px;height:18px;background:#f0f0f0"></div>
<div class="r" style="left:961px;top:152px;width:87px;height:1px;background:#fff"></div>
<div class="r" style="left:961px;top:152px;width:1px;height:17px;background:#fff"></div>
<div class="r" style="left:961px;top:169px;width:88px;height:1px;background:#a0a0a0"></div>
<div class="r" style="left:1048px;top:152px;width:1px;height:18px;background:#a0a0a0"></div>
<div class="r" style="left:961px;top:170px;width:89px;height:1px;background:#000"></div>
<div class="r" style="left:1049px;top:152px;width:1px;height:19px;background:#000"></div>
<div class="t" style="left:963.30px;top:156px;font-size:11px;color:#000;transform:scaleX(0.9500);transform-origin:0 0;">Representante</div>
<div class="r" style="left:1050px;top:152px;width:88px;height:18px;background:#f0f0f0"></div>
<div class="r" style="left:1050px;top:152px;width:87px;height:1px;background:#fff"></div>
<div class="r" style="left:1050px;top:152px;width:1px;height:17px;background:#fff"></div>
<div class="r" style="left:1050px;top:169px;width:88px;height:1px;background:#a0a0a0"></div>
<div class="r" style="left:1137px;top:152px;width:1px;height:18px;background:#a0a0a0"></div>
<div class="r" style="left:1050px;top:170px;width:89px;height:1px;background:#000"></div>
<div class="r" style="left:1138px;top:152px;width:1px;height:19px;background:#000"></div>
<div class="t" style="left:1052.30px;top:156px;font-size:11px;color:#000;transform:scaleX(0.9500);transform-origin:0 0;">Equipe</div>
<div class="r" style="left:445px;top:171px;width:11px;height:18px;background:#f0f0f0"></div>
<div class="r" style="left:445px;top:171px;width:10px;height:1px;background:#fff"></div>
<div class="r" style="left:445px;top:171px;width:1px;height:17px;background:#fff"></div>
<div class="r" style="left:445px;top:188px;width:11px;height:1px;background:#a0a0a0"></div>
<div class="r" style="left:455px;top:171px;width:1px;height:18px;background:#a0a0a0"></div>
<div class="r" style="left:445px;top:189px;width:12px;height:1px;background:#000"></div>
<div class="r" style="left:456px;top:171px;width:1px;height:19px;background:#000"></div>
<div class="r" style="left:457px;top:189px;width:682px;height:1px;background:#c0c0c0"></div>
<div class="t" style="left:486.82px;top:175px;font-size:11px;color:#000;transform:scaleX(0.9800);transform-origin:0 0;">1</div>
<div class="t" style="left:545.82px;top:175px;font-size:11px;color:#000;transform:scaleX(0.9800);transform-origin:0 0;">1</div>
<div class="t" style="left:588.44px;top:175px;font-size:11px;color:#000;transform:scaleX(0.9800);transform-origin:0 0;">255193</div>
<div class="t" style="left:644.10px;top:175px;font-size:11px;color:#000;transform:scaleX(0.9500);transform-origin:0 0;">R$: 74,22</div>
<div class="t" style="left:716.80px;top:175px;font-size:11px;color:#000;transform:scaleX(0.9500);transform-origin:0 0;">R$: 0,00</div>
<div class="t" style="left:783.80px;top:175px;font-size:11px;color:#000;transform:scaleX(0.9500);transform-origin:0 0;">R$: 0,00</div>
<div class="t" style="left:855.45px;top:175px;font-size:11px;color:#000;transform:scaleX(0.9500);transform-origin:0 0;">1,50 %</div>
<div class="t" style="left:916.80px;top:175px;font-size:11px;color:#000;transform:scaleX(0.9500);transform-origin:0 0;">R$: 0,98</div>
<div class="t" style="left:964.60px;top:175px;font-size:11px;color:#000;transform:scaleX(0.9709);transform-origin:0 0;">00000000000103</div>
<div class="r" style="left:445px;top:190px;width:11px;height:18px;background:#f0f0f0"></div>
<div class="r" style="left:445px;top:190px;width:10px;height:1px;background:#fff"></div>
<div class="r" style="left:445px;top:190px;width:1px;height:17px;background:#fff"></div>
<div class="r" style="left:445px;top:207px;width:11px;height:1px;background:#a0a0a0"></div>
<div class="r" style="left:455px;top:190px;width:1px;height:18px;background:#a0a0a0"></div>
<div class="r" style="left:445px;top:208px;width:12px;height:1px;background:#000"></div>
<div class="r" style="left:456px;top:190px;width:1px;height:19px;background:#000"></div>
<div class="r" style="left:457px;top:208px;width:682px;height:1px;background:#c0c0c0"></div>
<div class="t" style="left:486.82px;top:194px;font-size:11px;color:#000;transform:scaleX(0.9800);transform-origin:0 0;">2</div>
<div class="t" style="left:545.82px;top:194px;font-size:11px;color:#000;transform:scaleX(0.9800);transform-origin:0 0;">1</div>
<div class="t" style="left:588.44px;top:194px;font-size:11px;color:#000;transform:scaleX(0.9800);transform-origin:0 0;">263030</div>
<div class="t" style="left:638.40px;top:194px;font-size:11px;color:#000;transform:scaleX(0.9500);transform-origin:0 0;">R$: 166,12</div>
<div class="t" style="left:716.80px;top:194px;font-size:11px;color:#000;transform:scaleX(0.9500);transform-origin:0 0;">R$: 0,00</div>
<div class="t" style="left:783.80px;top:194px;font-size:11px;color:#000;transform:scaleX(0.9500);transform-origin:0 0;">R$: 0,00</div>
<div class="t" style="left:855.45px;top:194px;font-size:11px;color:#000;transform:scaleX(0.9500);transform-origin:0 0;">0,50 %</div>
<div class="t" style="left:916.80px;top:194px;font-size:11px;color:#000;transform:scaleX(0.9500);transform-origin:0 0;">R$: 0,73</div>
<div class="t" style="left:964.60px;top:194px;font-size:11px;color:#000;transform:scaleX(0.9709);transform-origin:0 0;">00000000000103</div>
<div class="r" style="left:445px;top:209px;width:11px;height:18px;background:#f0f0f0"></div>
<div class="r" style="left:445px;top:209px;width:10px;height:1px;background:#fff"></div>
<div class="r" style="left:445px;top:209px;width:1px;height:17px;background:#fff"></div>
<div class="r" style="left:445px;top:226px;width:11px;height:1px;background:#a0a0a0"></div>
<div class="r" style="left:455px;top:209px;width:1px;height:18px;background:#a0a0a0"></div>
<div class="r" style="left:445px;top:227px;width:12px;height:1px;background:#000"></div>
<div class="r" style="left:456px;top:209px;width:1px;height:19px;background:#000"></div>
<div class="r" style="left:457px;top:227px;width:682px;height:1px;background:#c0c0c0"></div>
<div class="t" style="left:486.82px;top:213px;font-size:11px;color:#000;transform:scaleX(0.9800);transform-origin:0 0;">3</div>
<div class="t" style="left:545.82px;top:213px;font-size:11px;color:#000;transform:scaleX(0.9800);transform-origin:0 0;">1</div>
<div class="t" style="left:588.44px;top:213px;font-size:11px;color:#000;transform:scaleX(0.9800);transform-origin:0 0;">263678</div>
<div class="t" style="left:638.40px;top:213px;font-size:11px;color:#000;transform:scaleX(0.9500);transform-origin:0 0;">R$: 169,68</div>
<div class="t" style="left:716.80px;top:213px;font-size:11px;color:#000;transform:scaleX(0.9500);transform-origin:0 0;">R$: 0,00</div>
<div class="t" style="left:783.80px;top:213px;font-size:11px;color:#000;transform:scaleX(0.9500);transform-origin:0 0;">R$: 0,00</div>
<div class="t" style="left:855.45px;top:213px;font-size:11px;color:#000;transform:scaleX(0.9500);transform-origin:0 0;">0,50 %</div>
<div class="t" style="left:916.80px;top:213px;font-size:11px;color:#000;transform:scaleX(0.9500);transform-origin:0 0;">R$: 0,75</div>
<div class="t" style="left:964.60px;top:213px;font-size:11px;color:#000;transform:scaleX(0.9709);transform-origin:0 0;">00000000000103</div>
<div class="r" style="left:445px;top:228px;width:11px;height:18px;background:#f0f0f0"></div>
<div class="r" style="left:445px;top:228px;width:10px;height:1px;background:#fff"></div>
<div class="r" style="left:445px;top:228px;width:1px;height:17px;background:#fff"></div>
<div class="r" style="left:445px;top:245px;width:11px;height:1px;background:#a0a0a0"></div>
<div class="r" style="left:455px;top:228px;width:1px;height:18px;background:#a0a0a0"></div>
<div class="r" style="left:445px;top:246px;width:12px;height:1px;background:#000"></div>
<div class="r" style="left:456px;top:228px;width:1px;height:19px;background:#000"></div>
<div class="r" style="left:457px;top:246px;width:682px;height:1px;background:#c0c0c0"></div>
<div class="t" style="left:486.82px;top:232px;font-size:11px;color:#000;transform:scaleX(0.9800);transform-origin:0 0;">4</div>
<div class="t" style="left:545.82px;top:232px;font-size:11px;color:#000;transform:scaleX(0.9800);transform-origin:0 0;">1</div>
<div class="t" style="left:588.44px;top:232px;font-size:11px;color:#000;transform:scaleX(0.9800);transform-origin:0 0;">263847</div>
<div class="t" style="left:638.40px;top:232px;font-size:11px;color:#000;transform:scaleX(0.9500);transform-origin:0 0;">R$: 149,87</div>
<div class="t" style="left:716.80px;top:232px;font-size:11px;color:#000;transform:scaleX(0.9500);transform-origin:0 0;">R$: 0,00</div>
<div class="t" style="left:783.80px;top:232px;font-size:11px;color:#000;transform:scaleX(0.9500);transform-origin:0 0;">R$: 0,00</div>
<div class="t" style="left:855.45px;top:232px;font-size:11px;color:#000;transform:scaleX(0.9500);transform-origin:0 0;">0,50 %</div>
<div class="t" style="left:916.80px;top:232px;font-size:11px;color:#000;transform:scaleX(0.9500);transform-origin:0 0;">R$: 0,66</div>
<div class="t" style="left:964.60px;top:232px;font-size:11px;color:#000;transform:scaleX(0.9709);transform-origin:0 0;">00000000000103</div>
<div class="r" style="left:445px;top:247px;width:11px;height:18px;background:#f0f0f0"></div>
<div class="r" style="left:445px;top:247px;width:10px;height:1px;background:#fff"></div>
<div class="r" style="left:445px;top:247px;width:1px;height:17px;background:#fff"></div>
<div class="r" style="left:445px;top:264px;width:11px;height:1px;background:#a0a0a0"></div>
<div class="r" style="left:455px;top:247px;width:1px;height:18px;background:#a0a0a0"></div>
<div class="r" style="left:445px;top:265px;width:12px;height:1px;background:#000"></div>
<div class="r" style="left:456px;top:247px;width:1px;height:19px;background:#000"></div>
<div class="r" style="left:457px;top:265px;width:682px;height:1px;background:#c0c0c0"></div>
<div class="t" style="left:486.82px;top:251px;font-size:11px;color:#000;transform:scaleX(0.9800);transform-origin:0 0;">5</div>
<div class="t" style="left:545.82px;top:251px;font-size:11px;color:#000;transform:scaleX(0.9800);transform-origin:0 0;">1</div>
<div class="t" style="left:588.44px;top:251px;font-size:11px;color:#000;transform:scaleX(0.9800);transform-origin:0 0;">263849</div>
<div class="t" style="left:644.10px;top:251px;font-size:11px;color:#000;transform:scaleX(0.9500);transform-origin:0 0;">R$: 86,18</div>
<div class="t" style="left:716.80px;top:251px;font-size:11px;color:#000;transform:scaleX(0.9500);transform-origin:0 0;">R$: 0,00</div>
<div class="t" style="left:783.80px;top:251px;font-size:11px;color:#000;transform:scaleX(0.9500);transform-origin:0 0;">R$: 0,00</div>
<div class="t" style="left:855.45px;top:251px;font-size:11px;color:#000;transform:scaleX(0.9500);transform-origin:0 0;">0,50 %</div>
<div class="t" style="left:916.80px;top:251px;font-size:11px;color:#000;transform:scaleX(0.9500);transform-origin:0 0;">R$: 0,38</div>
<div class="t" style="left:964.60px;top:251px;font-size:11px;color:#000;transform:scaleX(0.9709);transform-origin:0 0;">00000000000103</div>
<div class="r" style="left:445px;top:266px;width:11px;height:18px;background:#f0f0f0"></div>
<div class="r" style="left:445px;top:266px;width:10px;height:1px;background:#fff"></div>
<div class="r" style="left:445px;top:266px;width:1px;height:17px;background:#fff"></div>
<div class="r" style="left:445px;top:283px;width:11px;height:1px;background:#a0a0a0"></div>
<div class="r" style="left:455px;top:266px;width:1px;height:18px;background:#a0a0a0"></div>
<div class="r" style="left:445px;top:284px;width:12px;height:1px;background:#000"></div>
<div class="r" style="left:456px;top:266px;width:1px;height:19px;background:#000"></div>
<div class="r" style="left:457px;top:284px;width:682px;height:1px;background:#c0c0c0"></div>
<div class="t" style="left:486.82px;top:270px;font-size:11px;color:#000;transform:scaleX(0.9800);transform-origin:0 0;">6</div>
<div class="t" style="left:545.82px;top:270px;font-size:11px;color:#000;transform:scaleX(0.9800);transform-origin:0 0;">1</div>
<div class="t" style="left:588.44px;top:270px;font-size:11px;color:#000;transform:scaleX(0.9800);transform-origin:0 0;">263850</div>
<div class="t" style="left:638.40px;top:270px;font-size:11px;color:#000;transform:scaleX(0.9500);transform-origin:0 0;">R$: 273,49</div>
<div class="t" style="left:716.80px;top:270px;font-size:11px;color:#000;transform:scaleX(0.9500);transform-origin:0 0;">R$: 0,00</div>
<div class="t" style="left:783.80px;top:270px;font-size:11px;color:#000;transform:scaleX(0.9500);transform-origin:0 0;">R$: 0,00</div>
<div class="t" style="left:855.45px;top:270px;font-size:11px;color:#000;transform:scaleX(0.9500);transform-origin:0 0;">0,50 %</div>
<div class="t" style="left:916.80px;top:270px;font-size:11px;color:#000;transform:scaleX(0.9500);transform-origin:0 0;">R$: 1,20</div>
<div class="t" style="left:964.60px;top:270px;font-size:11px;color:#000;transform:scaleX(0.9709);transform-origin:0 0;">00000000000103</div>
<div class="r" style="left:445px;top:285px;width:11px;height:18px;background:#f0f0f0"></div>
<div class="r" style="left:445px;top:285px;width:10px;height:1px;background:#fff"></div>
<div class="r" style="left:445px;top:285px;width:1px;height:17px;background:#fff"></div>
<div class="r" style="left:445px;top:302px;width:11px;height:1px;background:#a0a0a0"></div>
<div class="r" style="left:455px;top:285px;width:1px;height:18px;background:#a0a0a0"></div>
<div class="r" style="left:445px;top:303px;width:12px;height:1px;background:#000"></div>
<div class="r" style="left:456px;top:285px;width:1px;height:19px;background:#000"></div>
<div class="r" style="left:457px;top:303px;width:682px;height:1px;background:#c0c0c0"></div>
<div class="t" style="left:486.82px;top:289px;font-size:11px;color:#000;transform:scaleX(0.9800);transform-origin:0 0;">7</div>
<div class="t" style="left:545.82px;top:289px;font-size:11px;color:#000;transform:scaleX(0.9800);transform-origin:0 0;">1</div>
<div class="t" style="left:588.44px;top:289px;font-size:11px;color:#000;transform:scaleX(0.9800);transform-origin:0 0;">263953</div>
<div class="t" style="left:644.10px;top:289px;font-size:11px;color:#000;transform:scaleX(0.9500);transform-origin:0 0;">R$: 96,57</div>
<div class="t" style="left:716.80px;top:289px;font-size:11px;color:#000;transform:scaleX(0.9500);transform-origin:0 0;">R$: 0,00</div>
<div class="t" style="left:783.80px;top:289px;font-size:11px;color:#000;transform:scaleX(0.9500);transform-origin:0 0;">R$: 0,00</div>
<div class="t" style="left:855.45px;top:289px;font-size:11px;color:#000;transform:scaleX(0.9500);transform-origin:0 0;">0,50 %</div>
<div class="t" style="left:916.80px;top:289px;font-size:11px;color:#000;transform:scaleX(0.9500);transform-origin:0 0;">R$: 0,42</div>
<div class="t" style="left:964.60px;top:289px;font-size:11px;color:#000;transform:scaleX(0.9709);transform-origin:0 0;">00000000000103</div>
<div class="r" style="left:445px;top:304px;width:11px;height:18px;background:#f0f0f0"></div>
<div class="r" style="left:445px;top:304px;width:10px;height:1px;background:#fff"></div>
<div class="r" style="left:445px;top:304px;width:1px;height:17px;background:#fff"></div>
<div class="r" style="left:445px;top:321px;width:11px;height:1px;background:#a0a0a0"></div>
<div class="r" style="left:455px;top:304px;width:1px;height:18px;background:#a0a0a0"></div>
<div class="r" style="left:445px;top:322px;width:12px;height:1px;background:#000"></div>
<div class="r" style="left:456px;top:304px;width:1px;height:19px;background:#000"></div>
<div class="r" style="left:457px;top:322px;width:682px;height:1px;background:#c0c0c0"></div>
<div class="t" style="left:486.82px;top:308px;font-size:11px;color:#000;transform:scaleX(0.9800);transform-origin:0 0;">8</div>
<div class="t" style="left:545.82px;top:308px;font-size:11px;color:#000;transform:scaleX(0.9800);transform-origin:0 0;">1</div>
<div class="t" style="left:588.44px;top:308px;font-size:11px;color:#000;transform:scaleX(0.9800);transform-origin:0 0;">264101</div>
<div class="t" style="left:644.10px;top:308px;font-size:11px;color:#000;transform:scaleX(0.9500);transform-origin:0 0;">R$: 92,26</div>
<div class="t" style="left:716.80px;top:308px;font-size:11px;color:#000;transform:scaleX(0.9500);transform-origin:0 0;">R$: 0,00</div>
<div class="t" style="left:783.80px;top:308px;font-size:11px;color:#000;transform:scaleX(0.9500);transform-origin:0 0;">R$: 0,00</div>
<div class="t" style="left:855.45px;top:308px;font-size:11px;color:#000;transform:scaleX(0.9500);transform-origin:0 0;">0,50 %</div>
<div class="t" style="left:916.80px;top:308px;font-size:11px;color:#000;transform:scaleX(0.9500);transform-origin:0 0;">R$: 0,41</div>
<div class="t" style="left:964.60px;top:308px;font-size:11px;color:#000;transform:scaleX(0.9709);transform-origin:0 0;">00000000000103</div>
<div class="r" style="left:445px;top:323px;width:11px;height:18px;background:#f0f0f0"></div>
<div class="r" style="left:445px;top:323px;width:10px;height:1px;background:#fff"></div>
<div class="r" style="left:445px;top:323px;width:1px;height:17px;background:#fff"></div>
<div class="r" style="left:445px;top:340px;width:11px;height:1px;background:#a0a0a0"></div>
<div class="r" style="left:455px;top:323px;width:1px;height:18px;background:#a0a0a0"></div>
<div class="r" style="left:445px;top:341px;width:12px;height:1px;background:#000"></div>
<div class="r" style="left:456px;top:323px;width:1px;height:19px;background:#000"></div>
<div class="r" style="left:457px;top:323px;width:682px;height:18px;background:#3399ff"></div>
<svg style="left:447px;top:326px" width="8" height="12" viewBox="0 0 8 12"><path d="M0.5 0.5 L7 6 L0.5 11.5 Z" fill="#000"/></svg>
<div class="r" style="left:457px;top:341px;width:682px;height:1px;background:#c0c0c0"></div>
<div class="t" style="left:486.82px;top:327px;font-size:11px;color:#fff;transform:scaleX(0.9800);transform-origin:0 0;">9</div>
<div class="t" style="left:545.82px;top:327px;font-size:11px;color:#fff;transform:scaleX(0.9800);transform-origin:0 0;">1</div>
<div class="t" style="left:588.44px;top:327px;font-size:11px;color:#fff;transform:scaleX(0.9800);transform-origin:0 0;">264281</div>
<div class="t" style="left:638.40px;top:327px;font-size:11px;color:#fff;transform:scaleX(0.9500);transform-origin:0 0;">R$: 171,44</div>
<div class="t" style="left:716.80px;top:327px;font-size:11px;color:#fff;transform:scaleX(0.9500);transform-origin:0 0;">R$: 0,00</div>
<div class="t" style="left:783.80px;top:327px;font-size:11px;color:#fff;transform:scaleX(0.9500);transform-origin:0 0;">R$: 0,00</div>
<div class="t" style="left:855.45px;top:327px;font-size:11px;color:#fff;transform:scaleX(0.9500);transform-origin:0 0;">0,50 %</div>
<div class="t" style="left:916.80px;top:327px;font-size:11px;color:#fff;transform:scaleX(0.9500);transform-origin:0 0;">R$: 0,75</div>
<div class="t" style="left:964.60px;top:327px;font-size:11px;color:#fff;transform:scaleX(0.9709);transform-origin:0 0;">00000000000103</div>
<div class="r" style="left:445px;top:342px;width:11px;height:18px;background:#f0f0f0"></div>
<div class="r" style="left:445px;top:342px;width:10px;height:1px;background:#fff"></div>
<div class="r" style="left:445px;top:342px;width:1px;height:17px;background:#fff"></div>
<div class="r" style="left:445px;top:359px;width:11px;height:1px;background:#a0a0a0"></div>
<div class="r" style="left:455px;top:342px;width:1px;height:18px;background:#a0a0a0"></div>
<div class="r" style="left:445px;top:360px;width:12px;height:1px;background:#000"></div>
<div class="r" style="left:456px;top:342px;width:1px;height:19px;background:#000"></div>
<div class="r" style="left:457px;top:360px;width:682px;height:1px;background:#c0c0c0"></div>
<div class="t" style="left:480.94px;top:346px;font-size:11px;color:#000;transform:scaleX(0.9800);transform-origin:0 0;">10</div>
<div class="t" style="left:545.82px;top:346px;font-size:11px;color:#000;transform:scaleX(0.9800);transform-origin:0 0;">1</div>
<div class="t" style="left:588.44px;top:346px;font-size:11px;color:#000;transform:scaleX(0.9800);transform-origin:0 0;">264318</div>
<div class="t" style="left:640.30px;top:346px;font-size:11px;color:#000;transform:scaleX(0.9500);transform-origin:0 0;">R$: 111,52</div>
<div class="t" style="left:716.80px;top:346px;font-size:11px;color:#000;transform:scaleX(0.9500);transform-origin:0 0;">R$: 0,00</div>
<div class="t" style="left:783.80px;top:346px;font-size:11px;color:#000;transform:scaleX(0.9500);transform-origin:0 0;">R$: 0,00</div>
<div class="t" style="left:855.45px;top:346px;font-size:11px;color:#000;transform:scaleX(0.9500);transform-origin:0 0;">0,50 %</div>
<div class="t" style="left:916.80px;top:346px;font-size:11px;color:#000;transform:scaleX(0.9500);transform-origin:0 0;">R$: 0,49</div>
<div class="t" style="left:964.60px;top:346px;font-size:11px;color:#000;transform:scaleX(0.9709);transform-origin:0 0;">00000000000103</div>
<div class="r" style="left:445px;top:361px;width:11px;height:18px;background:#f0f0f0"></div>
<div class="r" style="left:445px;top:361px;width:10px;height:1px;background:#fff"></div>
<div class="r" style="left:445px;top:361px;width:1px;height:17px;background:#fff"></div>
<div class="r" style="left:445px;top:378px;width:11px;height:1px;background:#a0a0a0"></div>
<div class="r" style="left:455px;top:361px;width:1px;height:18px;background:#a0a0a0"></div>
<div class="r" style="left:445px;top:379px;width:12px;height:1px;background:#000"></div>
<div class="r" style="left:456px;top:361px;width:1px;height:19px;background:#000"></div>
<div class="r" style="left:457px;top:379px;width:682px;height:1px;background:#c0c0c0"></div>
<div class="t" style="left:481.92px;top:365px;font-size:11px;color:#000;transform:scaleX(0.9800);transform-origin:0 0;">11</div>
<div class="t" style="left:545.82px;top:365px;font-size:11px;color:#000;transform:scaleX(0.9800);transform-origin:0 0;">1</div>
<div class="t" style="left:588.44px;top:365px;font-size:11px;color:#000;transform:scaleX(0.9800);transform-origin:0 0;">264319</div>
<div class="t" style="left:644.10px;top:365px;font-size:11px;color:#000;transform:scaleX(0.9500);transform-origin:0 0;">R$: 99,45</div>
<div class="t" style="left:716.80px;top:365px;font-size:11px;color:#000;transform:scaleX(0.9500);transform-origin:0 0;">R$: 0,00</div>
<div class="t" style="left:783.80px;top:365px;font-size:11px;color:#000;transform:scaleX(0.9500);transform-origin:0 0;">R$: 0,00</div>
<div class="t" style="left:855.45px;top:365px;font-size:11px;color:#000;transform:scaleX(0.9500);transform-origin:0 0;">0,50 %</div>
<div class="t" style="left:916.80px;top:365px;font-size:11px;color:#000;transform:scaleX(0.9500);transform-origin:0 0;">R$: 0,44</div>
<div class="t" style="left:964.60px;top:365px;font-size:11px;color:#000;transform:scaleX(0.9709);transform-origin:0 0;">00000000000103</div>
<div class="r" style="left:445px;top:380px;width:11px;height:18px;background:#f0f0f0"></div>
<div class="r" style="left:445px;top:380px;width:10px;height:1px;background:#fff"></div>
<div class="r" style="left:445px;top:380px;width:1px;height:17px;background:#fff"></div>
<div class="r" style="left:445px;top:397px;width:11px;height:1px;background:#a0a0a0"></div>
<div class="r" style="left:455px;top:380px;width:1px;height:18px;background:#a0a0a0"></div>
<div class="r" style="left:445px;top:398px;width:12px;height:1px;background:#000"></div>
<div class="r" style="left:456px;top:380px;width:1px;height:19px;background:#000"></div>
<div class="r" style="left:457px;top:398px;width:682px;height:1px;background:#c0c0c0"></div>
<div class="t" style="left:480.94px;top:384px;font-size:11px;color:#000;transform:scaleX(0.9800);transform-origin:0 0;">12</div>
<div class="t" style="left:545.82px;top:384px;font-size:11px;color:#000;transform:scaleX(0.9800);transform-origin:0 0;">1</div>
<div class="t" style="left:588.44px;top:384px;font-size:11px;color:#000;transform:scaleX(0.9800);transform-origin:0 0;">264621</div>
<div class="t" style="left:638.40px;top:384px;font-size:11px;color:#000;transform:scaleX(0.9500);transform-origin:0 0;">R$: 156,47</div>
<div class="t" style="left:716.80px;top:384px;font-size:11px;color:#000;transform:scaleX(0.9500);transform-origin:0 0;">R$: 0,00</div>
<div class="t" style="left:783.80px;top:384px;font-size:11px;color:#000;transform:scaleX(0.9500);transform-origin:0 0;">R$: 0,00</div>
<div class="t" style="left:855.45px;top:384px;font-size:11px;color:#000;transform:scaleX(0.9500);transform-origin:0 0;">0,50 %</div>
<div class="t" style="left:916.80px;top:384px;font-size:11px;color:#000;transform:scaleX(0.9500);transform-origin:0 0;">R$: 0,69</div>
<div class="t" style="left:964.60px;top:384px;font-size:11px;color:#000;transform:scaleX(0.9709);transform-origin:0 0;">00000000000103</div>
<div class="r" style="left:445px;top:399px;width:11px;height:18px;background:#f0f0f0"></div>
<div class="r" style="left:445px;top:399px;width:10px;height:1px;background:#fff"></div>
<div class="r" style="left:445px;top:399px;width:1px;height:17px;background:#fff"></div>
<div class="r" style="left:445px;top:416px;width:11px;height:1px;background:#a0a0a0"></div>
<div class="r" style="left:455px;top:399px;width:1px;height:18px;background:#a0a0a0"></div>
<div class="r" style="left:445px;top:417px;width:12px;height:1px;background:#000"></div>
<div class="r" style="left:456px;top:399px;width:1px;height:19px;background:#000"></div>
<div class="r" style="left:457px;top:417px;width:682px;height:1px;background:#c0c0c0"></div>
<div class="t" style="left:480.94px;top:403px;font-size:11px;color:#000;transform:scaleX(0.9800);transform-origin:0 0;">13</div>
<div class="t" style="left:545.82px;top:403px;font-size:11px;color:#000;transform:scaleX(0.9800);transform-origin:0 0;">1</div>
<div class="t" style="left:588.44px;top:403px;font-size:11px;color:#000;transform:scaleX(0.9800);transform-origin:0 0;">264622</div>
<div class="t" style="left:644.10px;top:403px;font-size:11px;color:#000;transform:scaleX(0.9500);transform-origin:0 0;">R$: 90,60</div>
<div class="t" style="left:716.80px;top:403px;font-size:11px;color:#000;transform:scaleX(0.9500);transform-origin:0 0;">R$: 0,00</div>
<div class="t" style="left:783.80px;top:403px;font-size:11px;color:#000;transform:scaleX(0.9500);transform-origin:0 0;">R$: 0,00</div>
<div class="t" style="left:855.45px;top:403px;font-size:11px;color:#000;transform:scaleX(0.9500);transform-origin:0 0;">0,50 %</div>
<div class="t" style="left:916.80px;top:403px;font-size:11px;color:#000;transform:scaleX(0.9500);transform-origin:0 0;">R$: 0,40</div>
<div class="t" style="left:964.60px;top:403px;font-size:11px;color:#000;transform:scaleX(0.9709);transform-origin:0 0;">00000000000103</div>
<div class="r" style="left:445px;top:418px;width:11px;height:18px;background:#f0f0f0"></div>
<div class="r" style="left:445px;top:418px;width:10px;height:1px;background:#fff"></div>
<div class="r" style="left:445px;top:418px;width:1px;height:17px;background:#fff"></div>
<div class="r" style="left:445px;top:435px;width:11px;height:1px;background:#a0a0a0"></div>
<div class="r" style="left:455px;top:418px;width:1px;height:18px;background:#a0a0a0"></div>
<div class="r" style="left:445px;top:436px;width:12px;height:1px;background:#000"></div>
<div class="r" style="left:456px;top:418px;width:1px;height:19px;background:#000"></div>
<div class="r" style="left:457px;top:436px;width:682px;height:1px;background:#c0c0c0"></div>
<div class="t" style="left:480.94px;top:422px;font-size:11px;color:#000;transform:scaleX(0.9800);transform-origin:0 0;">14</div>
<div class="t" style="left:545.82px;top:422px;font-size:11px;color:#000;transform:scaleX(0.9800);transform-origin:0 0;">1</div>
<div class="t" style="left:588.44px;top:422px;font-size:11px;color:#000;transform:scaleX(0.9800);transform-origin:0 0;">264683</div>
<div class="t" style="left:638.40px;top:422px;font-size:11px;color:#000;transform:scaleX(0.9500);transform-origin:0 0;">R$: 348,55</div>
<div class="t" style="left:716.80px;top:422px;font-size:11px;color:#000;transform:scaleX(0.9500);transform-origin:0 0;">R$: 0,00</div>
<div class="t" style="left:783.80px;top:422px;font-size:11px;color:#000;transform:scaleX(0.9500);transform-origin:0 0;">R$: 0,00</div>
<div class="t" style="left:855.45px;top:422px;font-size:11px;color:#000;transform:scaleX(0.9500);transform-origin:0 0;">1,50 %</div>
<div class="t" style="left:916.80px;top:422px;font-size:11px;color:#000;transform:scaleX(0.9500);transform-origin:0 0;">R$: 4,60</div>
<div class="t" style="left:964.60px;top:422px;font-size:11px;color:#000;transform:scaleX(0.9709);transform-origin:0 0;">00000000000103</div>
<div class="r" style="left:445px;top:437px;width:11px;height:18px;background:#f0f0f0"></div>
<div class="r" style="left:445px;top:437px;width:10px;height:1px;background:#fff"></div>
<div class="r" style="left:445px;top:437px;width:1px;height:17px;background:#fff"></div>
<div class="r" style="left:445px;top:454px;width:11px;height:1px;background:#a0a0a0"></div>
<div class="r" style="left:455px;top:437px;width:1px;height:18px;background:#a0a0a0"></div>
<div class="r" style="left:445px;top:455px;width:12px;height:1px;background:#000"></div>
<div class="r" style="left:456px;top:437px;width:1px;height:19px;background:#000"></div>
<div class="r" style="left:457px;top:455px;width:682px;height:1px;background:#c0c0c0"></div>
<div class="t" style="left:480.94px;top:441px;font-size:11px;color:#000;transform:scaleX(0.9800);transform-origin:0 0;">15</div>
<div class="t" style="left:545.82px;top:441px;font-size:11px;color:#000;transform:scaleX(0.9800);transform-origin:0 0;">1</div>
<div class="t" style="left:588.44px;top:441px;font-size:11px;color:#000;transform:scaleX(0.9800);transform-origin:0 0;">264845</div>
<div class="t" style="left:638.40px;top:441px;font-size:11px;color:#000;transform:scaleX(0.9500);transform-origin:0 0;">R$: 168,18</div>
<div class="t" style="left:716.80px;top:441px;font-size:11px;color:#000;transform:scaleX(0.9500);transform-origin:0 0;">R$: 0,00</div>
<div class="t" style="left:783.80px;top:441px;font-size:11px;color:#000;transform:scaleX(0.9500);transform-origin:0 0;">R$: 0,00</div>
<div class="t" style="left:855.45px;top:441px;font-size:11px;color:#000;transform:scaleX(0.9500);transform-origin:0 0;">0,50 %</div>
<div class="t" style="left:916.80px;top:441px;font-size:11px;color:#000;transform:scaleX(0.9500);transform-origin:0 0;">R$: 0,74</div>
<div class="t" style="left:964.60px;top:441px;font-size:11px;color:#000;transform:scaleX(0.9709);transform-origin:0 0;">00000000000103</div>
<div class="r" style="left:445px;top:456px;width:11px;height:18px;background:#f0f0f0"></div>
<div class="r" style="left:445px;top:456px;width:10px;height:1px;background:#fff"></div>
<div class="r" style="left:445px;top:456px;width:1px;height:17px;background:#fff"></div>
<div class="r" style="left:445px;top:473px;width:11px;height:1px;background:#a0a0a0"></div>
<div class="r" style="left:455px;top:456px;width:1px;height:18px;background:#a0a0a0"></div>
<div class="r" style="left:445px;top:474px;width:12px;height:1px;background:#000"></div>
<div class="r" style="left:456px;top:456px;width:1px;height:19px;background:#000"></div>
<div class="r" style="left:457px;top:474px;width:682px;height:1px;background:#c0c0c0"></div>
<div class="t" style="left:480.94px;top:460px;font-size:11px;color:#000;transform:scaleX(0.9800);transform-origin:0 0;">16</div>
<div class="t" style="left:545.82px;top:460px;font-size:11px;color:#000;transform:scaleX(0.9800);transform-origin:0 0;">1</div>
<div class="t" style="left:588.44px;top:460px;font-size:11px;color:#000;transform:scaleX(0.9800);transform-origin:0 0;">264846</div>
<div class="t" style="left:644.10px;top:460px;font-size:11px;color:#000;transform:scaleX(0.9500);transform-origin:0 0;">R$: 50,83</div>
<div class="t" style="left:716.80px;top:460px;font-size:11px;color:#000;transform:scaleX(0.9500);transform-origin:0 0;">R$: 0,00</div>
<div class="t" style="left:783.80px;top:460px;font-size:11px;color:#000;transform:scaleX(0.9500);transform-origin:0 0;">R$: 0,00</div>
<div class="t" style="left:855.45px;top:460px;font-size:11px;color:#000;transform:scaleX(0.9500);transform-origin:0 0;">0,50 %</div>
<div class="t" style="left:916.80px;top:460px;font-size:11px;color:#000;transform:scaleX(0.9500);transform-origin:0 0;">R$: 0,22</div>
<div class="t" style="left:964.60px;top:460px;font-size:11px;color:#000;transform:scaleX(0.9709);transform-origin:0 0;">00000000000103</div>
<div class="r" style="left:445px;top:475px;width:11px;height:18px;background:#f0f0f0"></div>
<div class="r" style="left:445px;top:475px;width:10px;height:1px;background:#fff"></div>
<div class="r" style="left:445px;top:475px;width:1px;height:17px;background:#fff"></div>
<div class="r" style="left:445px;top:492px;width:11px;height:1px;background:#a0a0a0"></div>
<div class="r" style="left:455px;top:475px;width:1px;height:18px;background:#a0a0a0"></div>
<div class="r" style="left:445px;top:493px;width:12px;height:1px;background:#000"></div>
<div class="r" style="left:456px;top:475px;width:1px;height:19px;background:#000"></div>
<div class="r" style="left:457px;top:493px;width:682px;height:1px;background:#c0c0c0"></div>
<div class="t" style="left:480.94px;top:479px;font-size:11px;color:#000;transform:scaleX(0.9800);transform-origin:0 0;">17</div>
<div class="t" style="left:545.82px;top:479px;font-size:11px;color:#000;transform:scaleX(0.9800);transform-origin:0 0;">1</div>
<div class="t" style="left:588.44px;top:479px;font-size:11px;color:#000;transform:scaleX(0.9800);transform-origin:0 0;">264919</div>
<div class="t" style="left:629.85px;top:479px;font-size:11px;color:#000;transform:scaleX(0.9500);transform-origin:0 0;">R$: 1.999,37</div>
<div class="t" style="left:716.80px;top:479px;font-size:11px;color:#000;transform:scaleX(0.9500);transform-origin:0 0;">R$: 0,00</div>
<div class="t" style="left:783.80px;top:479px;font-size:11px;color:#000;transform:scaleX(0.9500);transform-origin:0 0;">R$: 0,00</div>
<div class="t" style="left:855.45px;top:479px;font-size:11px;color:#000;transform:scaleX(0.9500);transform-origin:0 0;">1,50 %</div>
<div class="t" style="left:911.10px;top:479px;font-size:11px;color:#000;transform:scaleX(0.9500);transform-origin:0 0;">R$: 26,39</div>
<div class="t" style="left:964.60px;top:479px;font-size:11px;color:#000;transform:scaleX(0.9709);transform-origin:0 0;">00000000000103</div>
<div class="r" style="left:445px;top:494px;width:11px;height:18px;background:#f0f0f0"></div>
<div class="r" style="left:445px;top:494px;width:10px;height:1px;background:#fff"></div>
<div class="r" style="left:445px;top:494px;width:1px;height:17px;background:#fff"></div>
<div class="r" style="left:445px;top:511px;width:11px;height:1px;background:#a0a0a0"></div>
<div class="r" style="left:455px;top:494px;width:1px;height:18px;background:#a0a0a0"></div>
<div class="r" style="left:445px;top:512px;width:12px;height:1px;background:#000"></div>
<div class="r" style="left:456px;top:494px;width:1px;height:19px;background:#000"></div>
<div class="r" style="left:457px;top:512px;width:682px;height:1px;background:#c0c0c0"></div>
<div class="t" style="left:480.94px;top:498px;font-size:11px;color:#000;transform:scaleX(0.9800);transform-origin:0 0;">18</div>
<div class="t" style="left:545.82px;top:498px;font-size:11px;color:#000;transform:scaleX(0.9800);transform-origin:0 0;">1</div>
<div class="t" style="left:588.44px;top:498px;font-size:11px;color:#000;transform:scaleX(0.9800);transform-origin:0 0;">264958</div>
<div class="t" style="left:638.40px;top:498px;font-size:11px;color:#000;transform:scaleX(0.9500);transform-origin:0 0;">R$: 483,58</div>
<div class="t" style="left:716.80px;top:498px;font-size:11px;color:#000;transform:scaleX(0.9500);transform-origin:0 0;">R$: 0,00</div>
<div class="t" style="left:783.80px;top:498px;font-size:11px;color:#000;transform:scaleX(0.9500);transform-origin:0 0;">R$: 0,00</div>
<div class="t" style="left:855.45px;top:498px;font-size:11px;color:#000;transform:scaleX(0.9500);transform-origin:0 0;">1,50 %</div>
<div class="t" style="left:916.80px;top:498px;font-size:11px;color:#000;transform:scaleX(0.9500);transform-origin:0 0;">R$: 6,38</div>
<div class="t" style="left:964.60px;top:498px;font-size:11px;color:#000;transform:scaleX(0.9709);transform-origin:0 0;">00000000000103</div>
<div class="r" style="left:445px;top:513px;width:11px;height:18px;background:#f0f0f0"></div>
<div class="r" style="left:445px;top:513px;width:10px;height:1px;background:#fff"></div>
<div class="r" style="left:445px;top:513px;width:1px;height:17px;background:#fff"></div>
<div class="r" style="left:445px;top:530px;width:11px;height:1px;background:#a0a0a0"></div>
<div class="r" style="left:455px;top:513px;width:1px;height:18px;background:#a0a0a0"></div>
<div class="r" style="left:445px;top:531px;width:12px;height:1px;background:#000"></div>
<div class="r" style="left:456px;top:513px;width:1px;height:19px;background:#000"></div>
<div class="r" style="left:457px;top:531px;width:682px;height:1px;background:#c0c0c0"></div>
<div class="t" style="left:480.94px;top:517px;font-size:11px;color:#000;transform:scaleX(0.9800);transform-origin:0 0;">19</div>
<div class="t" style="left:545.82px;top:517px;font-size:11px;color:#000;transform:scaleX(0.9800);transform-origin:0 0;">1</div>
<div class="t" style="left:588.44px;top:517px;font-size:11px;color:#000;transform:scaleX(0.9800);transform-origin:0 0;">264994</div>
<div class="t" style="left:644.10px;top:517px;font-size:11px;color:#000;transform:scaleX(0.9500);transform-origin:0 0;">R$: 72,16</div>
<div class="t" style="left:716.80px;top:517px;font-size:11px;color:#000;transform:scaleX(0.9500);transform-origin:0 0;">R$: 0,00</div>
<div class="t" style="left:783.80px;top:517px;font-size:11px;color:#000;transform:scaleX(0.9500);transform-origin:0 0;">R$: 0,00</div>
<div class="t" style="left:855.45px;top:517px;font-size:11px;color:#000;transform:scaleX(0.9500);transform-origin:0 0;">1,50 %</div>
<div class="t" style="left:916.80px;top:517px;font-size:11px;color:#000;transform:scaleX(0.9500);transform-origin:0 0;">R$: 0,95</div>
<div class="t" style="left:964.60px;top:517px;font-size:11px;color:#000;transform:scaleX(0.9709);transform-origin:0 0;">00000000000103</div>
<div class="r" style="left:445px;top:532px;width:11px;height:18px;background:#f0f0f0"></div>
<div class="r" style="left:445px;top:532px;width:10px;height:1px;background:#fff"></div>
<div class="r" style="left:445px;top:532px;width:1px;height:17px;background:#fff"></div>
<div class="r" style="left:445px;top:549px;width:11px;height:1px;background:#a0a0a0"></div>
<div class="r" style="left:455px;top:532px;width:1px;height:18px;background:#a0a0a0"></div>
<div class="r" style="left:445px;top:550px;width:12px;height:1px;background:#000"></div>
<div class="r" style="left:456px;top:532px;width:1px;height:19px;background:#000"></div>
<div class="r" style="left:457px;top:550px;width:682px;height:1px;background:#c0c0c0"></div>
<div class="t" style="left:480.94px;top:536px;font-size:11px;color:#000;transform:scaleX(0.9800);transform-origin:0 0;">20</div>
<div class="t" style="left:545.82px;top:536px;font-size:11px;color:#000;transform:scaleX(0.9800);transform-origin:0 0;">1</div>
<div class="t" style="left:588.44px;top:536px;font-size:11px;color:#000;transform:scaleX(0.9800);transform-origin:0 0;">265000</div>
<div class="t" style="left:644.10px;top:536px;font-size:11px;color:#000;transform:scaleX(0.9500);transform-origin:0 0;">R$: 80,00</div>
<div class="t" style="left:716.80px;top:536px;font-size:11px;color:#000;transform:scaleX(0.9500);transform-origin:0 0;">R$: 0,00</div>
<div class="t" style="left:783.80px;top:536px;font-size:11px;color:#000;transform:scaleX(0.9500);transform-origin:0 0;">R$: 0,00</div>
<div class="t" style="left:855.45px;top:536px;font-size:11px;color:#000;transform:scaleX(0.9500);transform-origin:0 0;">1,50 %</div>
<div class="t" style="left:916.80px;top:536px;font-size:11px;color:#000;transform:scaleX(0.9500);transform-origin:0 0;">R$: 0,80</div>
<div class="t" style="left:964.60px;top:536px;font-size:11px;color:#000;transform:scaleX(0.9709);transform-origin:0 0;">00000000000103</div>
<div class="r" style="left:496px;top:171px;width:1px;height:362px;background:#c0c0c0"></div>
<div class="r" style="left:555px;top:171px;width:1px;height:362px;background:#c0c0c0"></div>
<div class="r" style="left:628px;top:171px;width:1px;height:362px;background:#c0c0c0"></div>
<div class="r" style="left:693px;top:171px;width:1px;height:362px;background:#c0c0c0"></div>
<div class="r" style="left:760px;top:171px;width:1px;height:362px;background:#c0c0c0"></div>
<div class="r" style="left:827px;top:171px;width:1px;height:362px;background:#c0c0c0"></div>
<div class="r" style="left:892px;top:171px;width:1px;height:362px;background:#c0c0c0"></div>
<div class="r" style="left:960px;top:171px;width:1px;height:362px;background:#c0c0c0"></div>
<div class="r" style="left:1049px;top:171px;width:1px;height:362px;background:#c0c0c0"></div>
<div class="r" style="left:1138px;top:171px;width:1px;height:362px;background:#c0c0c0"></div>
</body></html>
